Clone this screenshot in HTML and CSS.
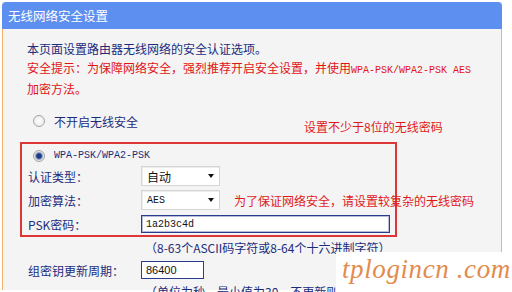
FILE: index.html
```html
<!DOCTYPE html>
<html lang="zh-CN">
<head>
<meta charset="utf-8">
<title>无线网络安全设置</title>
<link rel="stylesheet" href="styles.css">
</head>
<body>
<div class="panel">
  <div class="header">无线网络安全设置</div>
  <div class="content">
    <p class="intro">本页面设置路由器无线网络的安全认证选项。<br><span class="warn">安全提示：为保障网络安全，强烈推荐开启安全设置，并使用<span class="mono">WPA-PSK/WPA2-PSK AES</span><br>加密方法。</span></p>
    <div class="radio-row off"><span class="radio"></span><span>不开启无线安全</span></div>
    <div class="callout">设置不少于8位的无线密码</div>
    <div class="wpa-box">
      <div class="radio-row"><span class="radio checked"></span><span class="mono dark">WPA-PSK/WPA2-PSK</span></div>
      <div class="field"><span class="label">认证类型：</span><span class="select">自动<i class="arrow"></i></span></div>
      <div class="field"><span class="label">加密算法：</span><span class="select"><span class="mono">AES</span><i class="arrow"></i></span><span class="note">为了保证网络安全，请设置较复杂的无线密码</span></div>
      <div class="field"><span class="label">PSK密码：</span><span class="input wide mono">1a2b3c4d</span></div>
    </div>
    <div class="hint">（8-63个ASCII码字符或8-64个十六进制字符）</div>
    <div class="field group"><span class="label">组密钥更新周期：</span><span class="input short">86400</span></div>
    <div class="hint">（单位为秒，最小值为30，不更新则为0）</div>
  </div>
</div>
<div class="watermark">tplogincn .com</div>
</body>
</html>
```
FILE: styles.css
```css
html, body {
  margin: 0;
  height: 292px;
  overflow: hidden;
  background: #fff;
}
body {
  position: relative;
  font-family: "Noto Sans CJK SC", "Noto Sans", sans-serif;
  font-size: 12px;
  color: #1c2c7c;
}
.panel {
  position: relative;
  margin: 2px 0 0 2px;
  width: 500px;
}
.header {
  height: 27px;
  line-height: 27px;
  background: #5d8ff0;
  color: #fff;
  padding-left: 6px;
  border-radius: 4px 4px 0 0;
  font-size: 12.5px;
}
.content {
  background: #f4f4f4;
  border-left: 1px solid #f2b26c;
  border-right: 1px solid #f2b26c;
  padding: 11px 0 0 17px;
  height: 250px;
}
.intro {
  margin: 0 0 0 7px;
  line-height: 18.5px;
}
.warn {
  color: #e01414;
}
.mono {
  font-family: "Liberation Mono", "DejaVu Sans Mono", monospace;
  font-size: 10px;
}
.dark {
  color: #1c2c7c;
}
.radio-row {
  display: flex;
  align-items: center;
  gap: 9px;
  height: 21px;
  margin-left: 11px;
}
.radio-row.off {
  height: 20px;
  margin: 12.5px 0 0 13px;
}
.radio {
  width: 12px;
  height: 12px;
  box-sizing: border-box;
  border-radius: 50%;
  border: 1px solid #a4a4a4;
  background: radial-gradient(circle, #ffffff 0, #e4e4e4 100%);
}
.radio.checked {
  background: radial-gradient(circle, #1d3a86 0, #1d3a86 2.2px, #8ea2c4 3.4px, #e8e8e8 4.6px);
}
.callout {
  position: absolute;
  left: 302px;
  top: 117px;
  line-height: 16px;
  color: #e01a1a;
}
.wpa-box {
  width: 377px;
  box-sizing: border-box;
  margin-top: 11px;
  border: 2px solid #dc3636;
  padding: 1px 0;
}
.field {
  display: flex;
  align-items: center;
  height: 20px;
  padding-left: 6px;
  white-space: nowrap;
}
.field + .field {
  margin-top: 4px;
}
.label {
  width: 113px;
  flex: none;
}
.select {
  display: flex;
  align-items: center;
  justify-content: space-between;
  width: 79px;
  height: 20px;
  box-sizing: border-box;
  padding: 0 5px 0 5px;
  background: #fff;
  border: 1px solid #d6d6d6;
  box-shadow: inset 1px 1px 0 #ececec;
  color: #111;
  flex: none;
}
.arrow {
  width: 0;
  height: 0;
  border-left: 3.5px solid transparent;
  border-right: 3.5px solid transparent;
  border-top: 4px solid #111;
}
.note {
  margin-left: 14px;
  color: #e01a1a;
}
.input {
  display: flex;
  align-items: center;
  height: 18px;
  box-sizing: border-box;
  padding-left: 4px;
  background: #fff;
  border: 1px solid #2b3b8e;
  color: #111;
  flex: none;
}
.input.wide {
  width: 249px;
  box-shadow: inset 0 0 0 1px rgba(43, 59, 142, 0.35);
}
.input.short {
  width: 63px;
  font-size: 11px;
  font-family: "Liberation Sans", sans-serif;
}
.hint {
  margin: 2px 0 0 125px;
  line-height: 18px;
}
.hint + .field {
  margin-top: 4px;
}
.field.group {
  height: 18px;
  padding-left: 8px;
}
.field.group + .hint {
  margin-top: 4px;
}
.watermark {
  position: absolute;
  right: 0;
  bottom: 0;
  width: 176px;
  height: 40px;
  box-sizing: border-box;
  padding-left: 6px;
  background: #fff;
  color: #e38b4c;
  font-family: "Liberation Serif", serif;
  font-style: italic;
  font-size: 27px;
  line-height: 34px;
  letter-spacing: 0.6px;
  white-space: nowrap;
}
```
